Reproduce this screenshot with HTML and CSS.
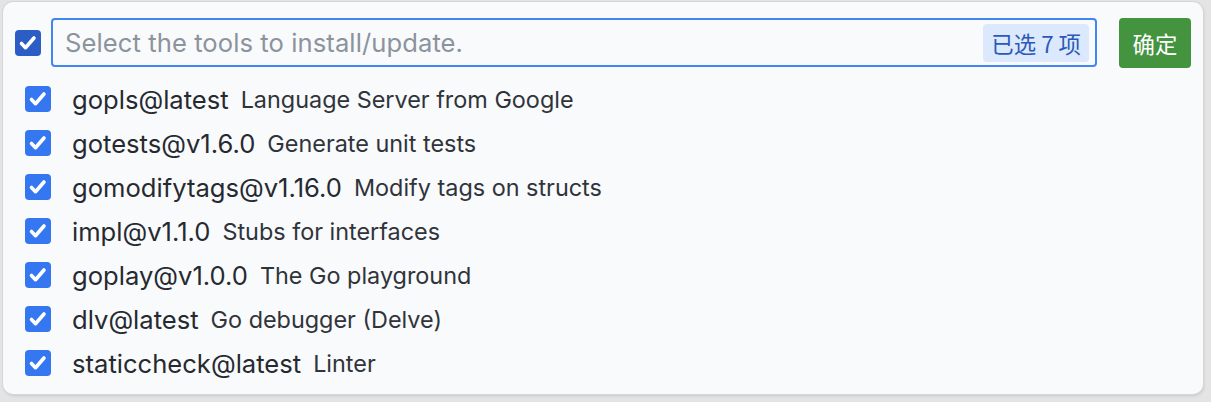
FILE: index.html
```html
<!DOCTYPE html>
<html lang="zh">
<head>
<meta charset="utf-8">
<link rel="stylesheet" href="styles.css">
</head>
<body>
<div class="panel">
  <div class="header">
    <span class="cb cb-all"><svg viewBox="0 0 26 26"><path d="M6.5 13.5l4 4.2 8.5-9.7" /></svg></span>
    <div class="input">
      <span class="placeholder">Select the tools to install/update.</span>
      <span class="badge">已选 7 项</span>
    </div>
    <button class="ok">确定</button>
  </div>
  <ul class="list">
    <li class="row"><span class="cb"><svg viewBox="0 0 26 26"><path d="M6.5 13.5l4 4.2 8.5-9.7" /></svg></span><span class="name">gopls@latest</span><span class="desc">Language Server from Google</span></li>
    <li class="row"><span class="cb"><svg viewBox="0 0 26 26"><path d="M6.5 13.5l4 4.2 8.5-9.7" /></svg></span><span class="name">gotests@v1.6.0</span><span class="desc">Generate unit tests</span></li>
    <li class="row"><span class="cb"><svg viewBox="0 0 26 26"><path d="M6.5 13.5l4 4.2 8.5-9.7" /></svg></span><span class="name">gomodifytags@v1.16.0</span><span class="desc">Modify tags on structs</span></li>
    <li class="row"><span class="cb"><svg viewBox="0 0 26 26"><path d="M6.5 13.5l4 4.2 8.5-9.7" /></svg></span><span class="name">impl@v1.1.0</span><span class="desc">Stubs for interfaces</span></li>
    <li class="row"><span class="cb"><svg viewBox="0 0 26 26"><path d="M6.5 13.5l4 4.2 8.5-9.7" /></svg></span><span class="name">goplay@v1.0.0</span><span class="desc">The Go playground</span></li>
    <li class="row"><span class="cb"><svg viewBox="0 0 26 26"><path d="M6.5 13.5l4 4.2 8.5-9.7" /></svg></span><span class="name">dlv@latest</span><span class="desc">Go debugger (Delve)</span></li>
    <li class="row"><span class="cb"><svg viewBox="0 0 26 26"><path d="M6.5 13.5l4 4.2 8.5-9.7" /></svg></span><span class="name">staticcheck@latest</span><span class="desc">Linter</span></li>
  </ul>
</div>
</body>
</html>
```

FILE: styles.css
```css
html, body {
  margin: 0;
  padding: 0;
}
body {
  background: #e4e4e4;
  width: 1211px;
  height: 402px;
  overflow: hidden;
  font-family: Inter, "Noto Sans", "Noto Sans CJK SC", sans-serif;
  padding: 2px 0 0 3px;
  box-sizing: border-box;
}
.panel {
  width: 1200px;
  height: 392px;
  box-sizing: border-box;
  background: #f9fafc;
  border-radius: 10px;
  box-shadow: 0 0 0 1px #d6d6d6, 1px 2px 3px rgba(0,0,0,0.12);
  padding: 16px 12px 9px 12px;
}
.header {
  display: flex;
  align-items: center;
  height: 49px;
}
.cb {
  width: 26px;
  height: 26px;
  border-radius: 4px;
  background: #3477f0;
  display: inline-flex;
  flex: none;
}
.cb svg {
  width: 26px;
  height: 26px;
}
.cb path {
  fill: none;
  stroke: #fff;
  stroke-width: 3.6;
  stroke-linecap: round;
  stroke-linejoin: round;
}
.cb-all {
  background: #2b5dc4;
}
.input {
  margin-left: 10px;
  width: 1046px;
  height: 49px;
  box-sizing: border-box;
  border: 2px solid #4286f0;
  border-radius: 4px;
  display: flex;
  align-items: center;
  justify-content: space-between;
  padding: 0 6px 0 12px;
}
.placeholder {
  font-size: 25.6px;
  letter-spacing: 0.08px;
  color: #8b939c;
}
.badge {
  background: #dce8fb;
  color: #2a5ab9;
  font-size: 22.4px;
  border-radius: 4px;
  padding: 0 8px;
  height: 38px;
  line-height: 38px;
  font-family: "Noto Sans CJK SC", sans-serif;
}
.ok {
  margin-left: 22px;
  width: 72px;
  height: 50px;
  border: none;
  border-radius: 4px;
  background: #43933f;
  color: #fff;
  font-size: 22.4px;
  font-family: "Noto Sans CJK SC", sans-serif;
  padding: 0;
}
.list {
  list-style: none;
  margin: 10px 0 0 0;
  padding: 0 0 0 10px;
}
.row {
  height: 44px;
  display: flex;
  align-items: center;
}
.name {
  margin-left: 21px;
  font-size: 25.6px;
  color: #262a30;
}
.desc {
  margin-left: 12px;
  font-size: 23.4px;
  color: #30343a;
}
```
